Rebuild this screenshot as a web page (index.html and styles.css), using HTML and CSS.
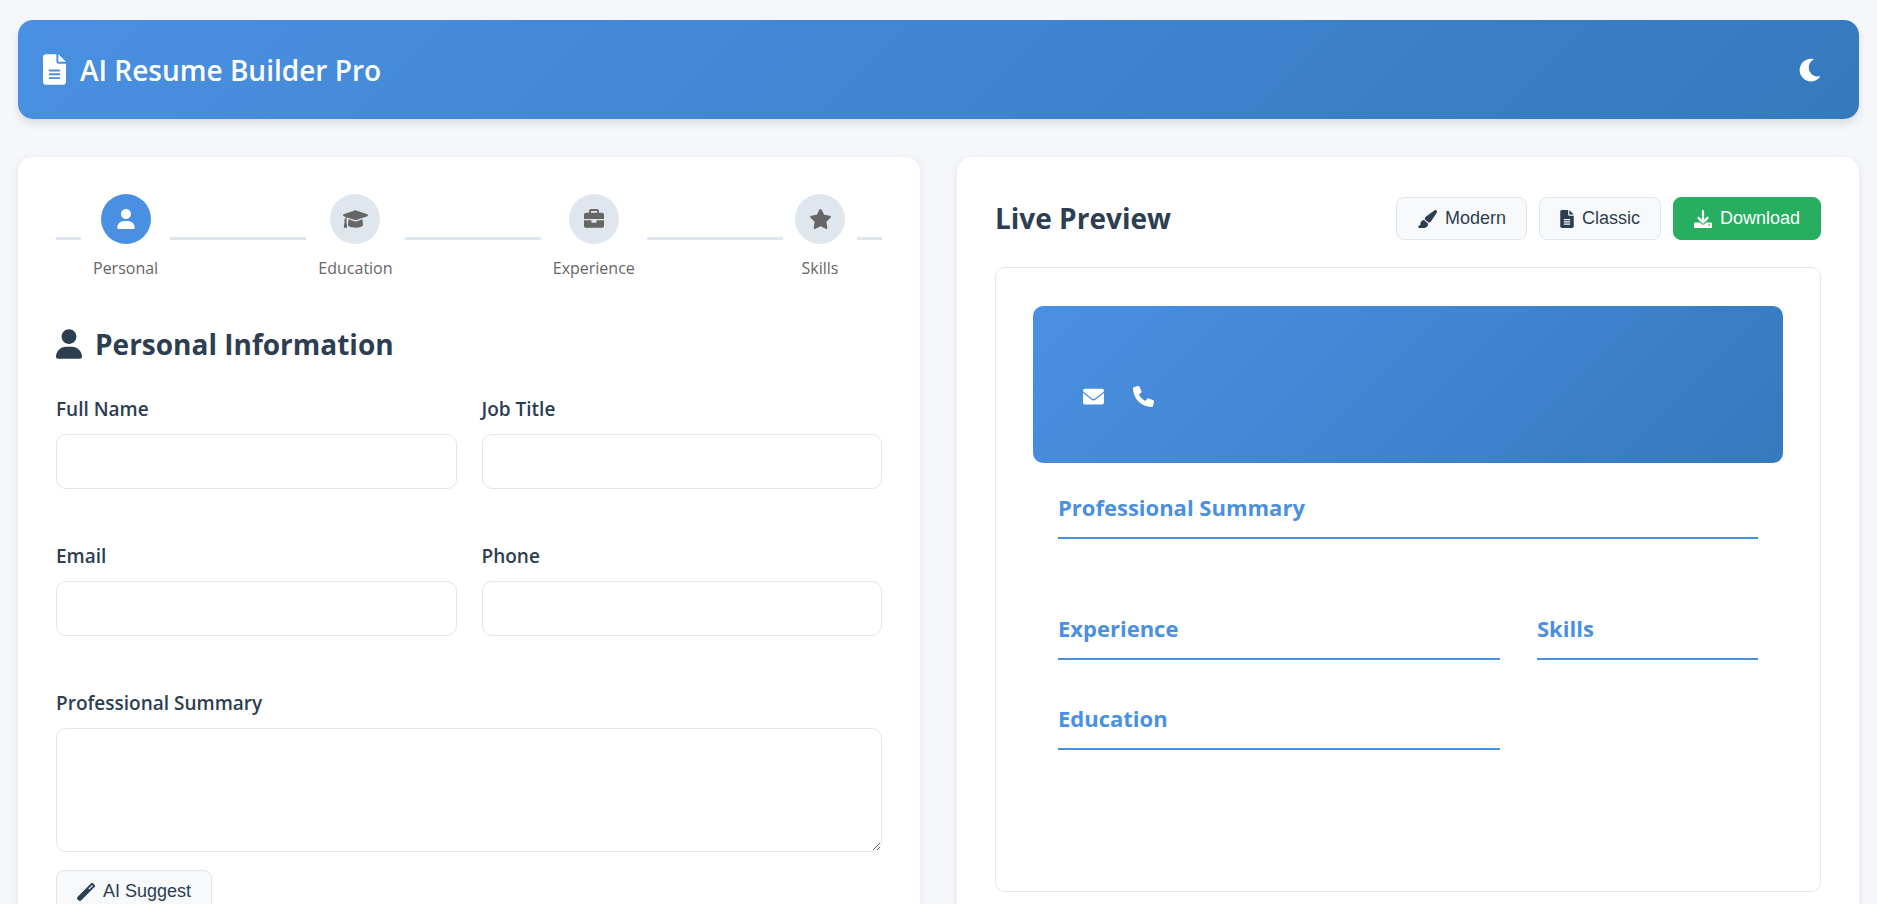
FILE: index.html
```
<!DOCTYPE html>
<html lang="en">
<head>
  <meta charset="UTF-8">
  <meta name="viewport" content="width=device-width, initial-scale=1.0">
  <title>AI Resume Builder Pro</title>
  <link rel="stylesheet" href="styles.css">
</head>
<body>

  <!-- Icon set -->
  <svg class="icon-sprite" aria-hidden="true">
    <symbol id="icon-file" viewBox="0 0 384 512"><path d="M256 0v128h128L256 0zM224 128L224 0H48C21.49 0 0 21.49 0 48v416C0 490.5 21.49 512 48 512h288c26.51 0 48-21.49 48-48V160h-128C238.3 160 224 145.7 224 128zM272 416h-160C103.2 416 96 408.8 96 400C96 391.2 103.2 384 112 384h160c8.836 0 16 7.162 16 16C288 408.8 280.8 416 272 416zM272 352h-160C103.2 352 96 344.8 96 336C96 327.2 103.2 320 112 320h160c8.836 0 16 7.162 16 16C288 344.8 280.8 352 272 352zM288 272C288 280.8 280.8 288 272 288h-160C103.2 288 96 280.8 96 272C96 263.2 103.2 256 112 256h160C280.8 256 288 263.2 288 272z"/></symbol>
    <symbol id="icon-moon" viewBox="0 0 512 512"><path d="M32 256c0-123.8 100.3-224 223.8-224c11.36 0 29.7 1.668 40.9 3.746c9.616 1.777 11.75 14.63 3.279 19.44C245 86.5 211.2 144.6 211.2 207.8c0 109.7 99.71 193 208.3 172.3c9.561-1.805 16.28 9.324 10.11 16.95C387.9 448.6 324.8 480 255.8 480C132.1 480 32 379.6 32 256z"/></symbol>
    <symbol id="icon-user" viewBox="0 0 448 512"><path d="M224 256c70.7 0 128-57.31 128-128s-57.3-128-128-128C153.3 0 96 57.31 96 128S153.3 256 224 256zM274.7 304H173.3C77.61 304 0 381.6 0 477.3c0 19.14 15.52 34.67 34.66 34.67h378.7C432.5 512 448 496.5 448 477.3C448 381.6 370.4 304 274.7 304z"/></symbol>
    <symbol id="icon-cap" viewBox="0 0 640 512"><path d="M623.1 136.9l-282.7-101.2c-13.73-4.91-28.7-4.91-42.43 0L16.05 136.9C6.438 140.4 0 149.6 0 160s6.438 19.65 16.05 23.09L76.07 204.6c-11.89 15.8-20.26 34.16-24.55 53.95C40.05 263.4 32 274.8 32 288c0 9.953 4.814 18.49 11.94 24.36l-24.83 149C17.48 471.1 25 480 34.89 480H93.11c9.887 0 17.41-8.879 15.78-18.63l-24.83-149C91.19 306.5 96 297.1 96 288c0-10.29-5.174-19.03-12.72-24.89c4.252-17.76 12.88-33.82 24.94-47.03l190.6 68.23c13.73 4.91 28.7 4.91 42.43 0l282.7-101.2C633.6 179.6 640 170.4 640 160S633.6 140.4 623.1 136.9zM352 314.4C341.7 318.1 330.9 320 320 320c-10.92 0-21.69-1.867-32-5.555L142.8 262.5L128 405.3C128 446.6 213.1 480 320 480c105.1 0 192-33.4 192-74.67l-14.78-142.9L352 314.4z"/></symbol>
    <symbol id="icon-briefcase" viewBox="0 0 512 512"><path d="M320 336c0 8.844-7.156 16-16 16h-96C199.2 352 192 344.8 192 336V288H0v144C0 457.6 22.41 480 48 480h416c25.59 0 48-22.41 48-48V288h-192V336zM464 96H384V48C384 22.41 361.6 0 336 0h-160C150.4 0 128 22.41 128 48V96H48C22.41 96 0 118.4 0 144V256h512V144C512 118.4 489.6 96 464 96zM336 96h-160V48h160V96z"/></symbol>
    <symbol id="icon-star" viewBox="0 0 576 512"><path d="M381.2 150.3L524.9 171.5C536.8 173.2 546.8 181.6 550.6 193.1C554.4 204.7 551.3 217.3 542.7 225.9L438.5 328.1L463.1 474.7C465.1 486.7 460.2 498.9 450.2 506C440.3 513.1 427.2 514 416.5 508.3L288.1 439.8L159.8 508.3C149 514 135.9 513.1 126 506C116.1 498.9 111.1 486.7 113.2 474.7L137.8 328.1L33.58 225.9C24.97 217.3 21.91 204.7 25.69 193.1C29.46 181.6 39.43 173.2 51.42 171.5L195 150.3L259.4 17.97C264.7 6.995 275.8 0 288 0C300.4 0 311.5 6.995 316.9 17.97L381.2 150.3z"/></symbol>
    <symbol id="icon-brush" viewBox="0 0 576 512"><path d="M224 263.3C224.2 233.3 238.4 205.2 262.4 187.2L499.1 9.605C517.7-4.353 543.6-2.965 560.7 12.9C577.7 28.76 580.8 54.54 568.2 74.07L406.5 324.1C391.3 347.7 366.6 363.2 339.3 367.1L224 263.3zM320 400C320 461.9 269.9 512 208 512H64C46.33 512 32 497.7 32 480C32 462.3 46.33 448 64 448H68.81C86.44 448 98.4 429.1 96.59 411.6C96.2 407.8 96 403.9 96 400C96 339.6 143.9 290.3 203.7 288.1L319.8 392.5C319.9 394.1 320 397.5 320 400z"/></symbol>
    <symbol id="icon-download" viewBox="0 0 512 512"><path d="M480 352h-133.5l-45.25 45.25C289.2 409.3 273.1 416 256 416s-33.16-6.656-45.25-18.75L165.5 352H32c-17.67 0-32 14.33-32 32v96c0 17.67 14.33 32 32 32h448c17.67 0 32-14.33 32-32v-96C512 366.3 497.7 352 480 352zM432 456c-13.2 0-24-10.8-24-24c0-13.2 10.8-24 24-24s24 10.8 24 24C456 445.2 445.2 456 432 456zM233.4 374.6C239.6 380.9 247.8 384 256 384s16.38-3.125 22.62-9.375l128-128c12.49-12.5 12.49-32.75 0-45.25c-12.5-12.5-32.76-12.5-45.25 0L288 274.8V32c0-17.67-14.33-32-32-32C238.3 0 224 14.33 224 32v242.8L150.6 201.4c-12.49-12.5-32.75-12.5-45.25 0c-12.49 12.5-12.49 32.75 0 45.25L233.4 374.6z"/></symbol>
    <symbol id="icon-envelope" viewBox="0 0 512 512"><path d="M256 352c-16.53 0-33.06-5.422-47.16-16.41L0 173.2V400C0 426.5 21.49 448 48 448h416c26.51 0 48-21.49 48-48V173.2l-208.8 162.5C289.1 346.6 272.5 352 256 352zM16.29 145.3l212.2 165.1c16.19 12.6 38.87 12.6 55.06 0l212.2-165.1C505.1 137.3 512 125 512 112C512 85.49 490.5 64 464 64h-416C21.49 64 0 85.49 0 112C0 125 6.01 137.3 16.29 145.3z"/></symbol>
    <symbol id="icon-phone" viewBox="0 0 512 512"><path d="M511.2 387l-23.25 100.8c-3.266 14.25-15.79 24.22-30.46 24.22C205.2 512 0 306.8 0 54.5c0-14.66 9.969-27.2 24.22-30.45l100.8-23.25C139.7-2.602 154.7 5.018 160.8 18.92l46.52 108.5c5.438 12.78 1.77 27.67-8.98 36.45L144.5 207.1c33.98 69.22 90.26 125.5 159.5 159.5l44.08-53.8c8.688-10.78 23.69-14.51 36.47-8.975l108.5 46.51C506.1 357.2 514.6 372.4 511.2 387z"/></symbol>
    <symbol id="icon-wand" viewBox="0 0 512 512"><path fill-rule="evenodd" d="M14.06 463.3C-4.686 444.6-4.686 414.2 14.06 395.4L395.4 14.06C414.2-4.686 444.6-4.686 463.3 14.06L497.9 48.64C516.6 67.38 516.6 97.78 497.9 116.5L116.5 497.9C97.78 516.6 67.38 516.6 48.64 497.9L14.06 463.3zM347.6 187.6L452.6 82.6L429.3 59.3L324.3 164.3L347.6 187.6z"/></symbol>
  </svg>

  <div class="container">

    <header class="header">
      <h1 class="logo"><svg class="icon icon-file"><use href="#icon-file"/></svg>AI Resume Builder Pro</h1>
      <button class="theme-toggle" id="themeToggle" type="button" aria-label="Toggle dark mode"><svg class="icon"><use href="#icon-moon"/></svg></button>
    </header>

    <main class="main-content">

      <section class="panel">
        <div class="progress">
          <div class="step active">
            <div class="step-icon"><svg class="icon"><use href="#icon-user"/></svg></div>
            <span>Personal</span>
          </div>
          <div class="step">
            <div class="step-icon"><svg class="icon icon-wide"><use href="#icon-cap"/></svg></div>
            <span>Education</span>
          </div>
          <div class="step">
            <div class="step-icon"><svg class="icon"><use href="#icon-briefcase"/></svg></div>
            <span>Experience</span>
          </div>
          <div class="step">
            <div class="step-icon"><svg class="icon icon-star"><use href="#icon-star"/></svg></div>
            <span>Skills</span>
          </div>
        </div>

        <form class="form">
          <h2 class="form-title"><svg class="icon icon-user"><use href="#icon-user"/></svg>Personal Information</h2>

          <div class="form-grid">
            <div class="form-group">
              <label for="fullName">Full Name</label>
              <input type="text" id="fullName">
            </div>
            <div class="form-group">
              <label for="jobTitle">Job Title</label>
              <input type="text" id="jobTitle">
            </div>
            <div class="form-group">
              <label for="email">Email</label>
              <input type="email" id="email">
            </div>
            <div class="form-group">
              <label for="phone">Phone</label>
              <input type="tel" id="phone">
            </div>
            <div class="form-group full">
              <label for="summary">Professional Summary</label>
              <textarea id="summary"></textarea>
              <button class="btn" type="button"><svg class="icon"><use href="#icon-wand"/></svg>AI Suggest</button>
            </div>
          </div>
        </form>
      </section>

      <section class="panel">
        <div class="preview-header">
          <h2>Live Preview</h2>
          <div class="preview-actions">
            <button class="btn" type="button"><svg class="icon icon-brush"><use href="#icon-brush"/></svg>Modern</button>
            <button class="btn" type="button"><svg class="icon icon-file"><use href="#icon-file"/></svg>Classic</button>
            <button class="btn btn-download" type="button"><svg class="icon"><use href="#icon-download"/></svg>Download</button>
          </div>
        </div>

        <div class="resume">
          <div class="resume-header">
            <div class="contact">
              <svg class="icon"><use href="#icon-envelope"/></svg>
              <svg class="icon"><use href="#icon-phone"/></svg>
            </div>
          </div>
          <div class="resume-body">
            <section class="resume-summary">
              <h3>Professional Summary</h3>
            </section>
            <div class="resume-columns">
              <div>
                <h3>Experience</h3>
                <h3>Education</h3>
              </div>
              <div>
                <h3>Skills</h3>
              </div>
            </div>
          </div>
        </div>
      </section>

    </main>
  </div>

</body>
</html>
```
FILE: styles.css
```
:root {
  --primary: #4a90e2;
  --primary-dark: #357abd;
  --text: #2c3e50;
  --muted: #666;
  --border: #e0e6ed;
  --success: #27ae60;
}

* {
  margin: 0;
  padding: 0;
  box-sizing: border-box;
}

body {
  font-family: 'Segoe UI', 'Open Sans', sans-serif;
  font-size: 18px;
  background-color: #f5f7fb;
  color: var(--text);
}

.icon-sprite {
  display: none;
}

.icon {
  width: 20px;
  height: 20px;
  fill: currentColor;
  flex-shrink: 0;
}

.container {
  padding: 20px 18px;
}

/* Header */
.header {
  display: flex;
  justify-content: space-between;
  align-items: center;
  height: 99px;
  padding: 0 25px;
  margin-bottom: 38px;
  border-radius: 15px;
  background: linear-gradient(135deg, var(--primary), var(--primary-dark));
  box-shadow: 0 5px 8px rgba(0, 0, 0, 0.1);
  color: #fff;
}

.logo {
  display: flex;
  align-items: center;
  gap: 14px;
  font-size: 28px;
  font-weight: 600;
}

.logo .icon {
  width: 23px;
  height: 31px;
}

.theme-toggle {
  padding: 10px;
  border: none;
  background: none;
  color: #fff;
  cursor: pointer;
}

.theme-toggle .icon {
  display: block;
  width: 26px;
  height: 26px;
}

/* Layout */
.main-content {
  display: grid;
  grid-template-columns: 1fr 1fr;
  gap: 37px;
}

.panel {
  padding: 37px 38px;
  border-radius: 15px;
  background: #fff;
  box-shadow: 0 2px 10px rgba(0, 0, 0, 0.08);
}

/* Progress steps */
.progress {
  position: relative;
  display: flex;
  justify-content: space-between;
  padding: 0 25px;
  margin-bottom: 44px;
}

.progress::before {
  content: '';
  position: absolute;
  top: 50%;
  left: 0;
  right: 0;
  height: 3px;
  background: var(--border);
}

.step {
  position: relative;
  display: flex;
  flex-direction: column;
  align-items: center;
  gap: 12px;
  padding: 0 12px;
  background: #fff;
  color: var(--muted);
  font-size: 16px;
  line-height: 24px;
}

.step-icon {
  display: flex;
  justify-content: center;
  align-items: center;
  width: 50px;
  height: 50px;
  border-radius: 50%;
  background: var(--border);
}

.step.active .step-icon {
  background: var(--primary);
  color: #fff;
}

.icon-wide {
  width: 25px;
}

.icon-star {
  width: 23px;
}

/* Form */
.form-title {
  display: flex;
  align-items: center;
  gap: 13px;
  margin-bottom: 30px;
  font-size: 28px;
  line-height: 40px;
}

.form-title .icon {
  width: 26px;
  height: 30px;
}

.form-grid {
  display: grid;
  grid-template-columns: 1fr 1fr;
  gap: 25px;
}

.form-group {
  margin-bottom: 27px;
}

.form-group.full {
  grid-column: 1 / -1;
}

.form-group label {
  display: block;
  margin-bottom: 10px;
  font-size: 19px;
  font-weight: 600;
  line-height: 30px;
}

.form-group input,
.form-group textarea {
  display: block;
  width: 100%;
  height: 55px;
  padding: 15px;
  border: 1px solid var(--border);
  border-radius: 10px;
  background: #fff;
  color: var(--text);
  font-family: inherit;
  font-size: 18px;
}

.form-group textarea {
  height: 124px;
  margin-bottom: 18px;
  resize: vertical;
}

.btn {
  display: inline-flex;
  align-items: center;
  gap: 8px;
  height: 43px;
  padding: 0 20px;
  border: 1px solid var(--border);
  border-radius: 8px;
  background: #f8f9fb;
  color: var(--text);
  font-family: Arial, 'Liberation Sans', sans-serif;
  font-size: 18px;
  cursor: pointer;
}

.btn .icon {
  width: 18px;
  height: 18px;
}

.btn .icon-file {
  width: 14px;
}

.btn .icon-brush {
  width: 20px;
}

.btn-download {
  border-color: var(--success);
  background: var(--success);
  color: #fff;
}

/* Preview */
.preview-header {
  display: flex;
  justify-content: space-between;
  align-items: center;
  margin-bottom: 24px;
}

.preview-header h2 {
  font-size: 28px;
  line-height: 49px;
}

.preview-actions {
  display: flex;
  gap: 12px;
}

.resume {
  min-height: 625px;
  padding: 38px 37px;
  border: 1px solid var(--border);
  border-radius: 10px;
}

.resume-header {
  height: 157px;
  padding: 80px 50px 0;
  border-radius: 10px;
  background: linear-gradient(135deg, var(--primary), var(--primary-dark));
  color: #fff;
}

.contact {
  display: flex;
  gap: 29px;
}

.contact .icon {
  width: 21px;
  height: 21px;
}

.resume-body {
  padding: 25px;
}

.resume-summary {
  margin-bottom: 70px;
}

.resume-body h3 {
  padding-bottom: 11px;
  margin-bottom: 39px;
  border-bottom: 2px solid var(--primary);
  color: var(--primary);
  font-size: 22px;
  line-height: 38px;
}

.resume-columns {
  display: grid;
  grid-template-columns: 2fr 1fr;
  gap: 37px;
}
```
